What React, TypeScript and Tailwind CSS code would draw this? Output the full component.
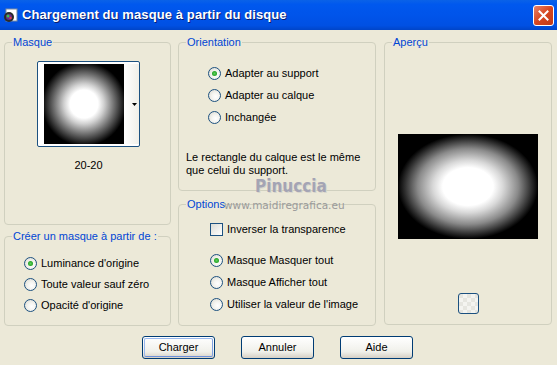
import React from "react";

const F = { fontFamily: '"Liberation Sans", Arial, sans-serif' };

function Radio({ checked, label }: { checked?: boolean; label: string }) {
  return (
    <div className="flex items-center h-[13px]">
      <div className="w-[13px] h-[13px] rounded-full border border-[#1C5180] bg-[radial-gradient(circle_at_60%_60%,#ffffff_0,#f4f4f0_40%,#d8d6cc_100%)] flex items-center justify-center shrink-0">
        {checked && <div className="w-[5px] h-[5px] rounded-full bg-[radial-gradient(circle,#5ed05e_0,#21a121_70%)]" />}
      </div>
      <span className="ml-[4px] text-[11px] text-black leading-none whitespace-nowrap">{label}</span>
    </div>
  );
}

function Group({ title, className, children }: { title: string; className?: string; children?: React.ReactNode }) {
  return (
    <div className={"relative border border-[#D0D0BF] rounded-[4px] " + (className || "")}>
      <span className="absolute -top-[8px] left-[7px] bg-[#ECE9D8] px-[1px] text-[11px] leading-[14px] text-[#0046D5] whitespace-nowrap">{title}</span>
      {children}
    </div>
  );
}

function Btn({ label, focus }: { label: string; focus?: boolean }) {
  return (
    <div className="w-[73px] h-[23px] rounded-[3px] border border-[#003C74] bg-[linear-gradient(#ffffff,#f0f0ea_70%,#d6d0c5)] flex items-center justify-center relative">
      {focus && <div className="absolute inset-[1px] rounded-[2px] border border-[#99B8EE] border-b-[#6C90DA] border-r-[#7FA0E0]" />}
      <span className="relative text-[11px] text-black leading-none">{label}</span>
    </div>
  );
}

export default function App() {
  return (
    <div className="w-[557px] h-[365px] bg-[#ECE9D8] relative overflow-hidden" style={F}>
      {/* Title bar */}
      <div className="h-[30px] bg-[linear-gradient(#0A62E8,#0058EE_15%,#0054EA_50%,#0050E3_85%,#0045C8)] flex items-center pl-[3px] pr-[3px]">
        <svg width="15" height="15" viewBox="0 0 15 15" className="mr-[4px]">
          <rect x="3" y="1" width="11" height="12" fill="#ffffff" stroke="#7a8aa0" />
          <circle cx="6" cy="9" r="5" fill="#2a2a2a" />
          <circle cx="6" cy="9" r="3" fill="#6a2a8a" />
          <circle cx="5" cy="8" r="1.5" fill="#3ec050" />
          <circle cx="7.5" cy="10" r="1.2" fill="#e04040" />
        </svg>
        <span className="text-white font-bold text-[13px] tracking-[0.1px] [text-shadow:1px_1px_0_#0A1E6E]">Chargement du masque à partir du disque</span>
        <div className="ml-auto w-[21px] h-[21px] rounded-[3px] border border-white bg-[linear-gradient(135deg,#E8836A,#D7461F_50%,#C03A18)] flex items-center justify-center">
          <svg width="11" height="11" viewBox="0 0 11 11">
            <path d="M1.5 1.5 L9.5 9.5 M9.5 1.5 L1.5 9.5" stroke="#ffffff" strokeWidth="2" strokeLinecap="square" />
          </svg>
        </div>
      </div>

      {/* Body */}
      <div className="flex pl-[4px] pt-[12px]">
        {/* Left column */}
        <div className="flex flex-col w-[167px] gap-[11px]">
          <Group title="Masque" className="h-[183px] flex flex-col items-center">
            <div className="mt-[18px] ml-[2px] w-[103px] h-[86px] rounded-[2px] border border-[#1C5180] bg-white flex items-start pl-[6px] pt-[2px]">
              <div className="w-[80px] h-[80px] bg-[radial-gradient(circle_at_50%_50%,#ffffff_0,#ffffff_14px,#d0d0d0_20px,#707070_30px,#000000_42px)]" />
              <div className="flex-1 h-[80px] bg-[linear-gradient(90deg,#ffffff,#f0efe8)] flex items-center justify-end pr-[2px]">
                <svg width="5" height="3" viewBox="0 0 5 3"><path d="M0 0 H5 L2.5 3 Z" fill="#000" /></svg>
              </div>
            </div>
            <div className="mt-[13px] ml-[2px] text-[11px] leading-none text-black">20-20</div>
          </Group>
          <Group title="Créer un masque à partir de :" className="h-[90px] flex flex-col gap-[8px] pl-[19px] pt-[20px]">
            <Radio checked label="Luminance d'origine" />
            <Radio label="Toute valeur sauf zéro" />
            <Radio label="Opacité d'origine" />
          </Group>
        </div>

        {/* Middle column */}
        <div className="flex flex-col w-[198px] gap-[13px] ml-[7px]">
          <Group title="Orientation" className="h-[149px] flex flex-col pl-[29px] pt-[24px]">
            <div className="flex flex-col gap-[9px]">
              <Radio checked label="Adapter au support" />
              <Radio label="Adapter au calque" />
              <Radio label="Inchangée" />
            </div>
            <div className="-ml-[22px] mt-[27px] text-[11px] leading-[13px] text-black">
              Le rectangle du calque est le même
              <br />
              que celui du support.
            </div>
          </Group>
          <Group title="Options" className="h-[122px] flex flex-col pl-[31px] pt-[18px]">
            <div className="flex items-center">
              <div className="w-[13px] h-[13px] border border-[#1C5180] bg-[linear-gradient(135deg,#dcdcd4,#ffffff)]" />
              <span className="ml-[4px] text-[11px] leading-none text-black">Inverser la transparence</span>
            </div>
            <div className="flex flex-col gap-[9px] mt-[18px]">
              <Radio checked label="Masque Masquer tout" />
              <Radio label="Masque Afficher tout" />
              <Radio label="Utiliser la valeur de l'image" />
            </div>
          </Group>
        </div>

        {/* Right column */}
        <div className="flex flex-col w-[168px] ml-[8px]">
          <Group title="Aperçu" className="h-[283px] flex flex-col items-center">
            <div className="mt-[91px] w-[140px] h-[105px] bg-[radial-gradient(ellipse_closest-side_at_50%_50%,#ffffff_0,#ffffff_36%,#d8d8d8_50%,#8a8a8a_72%,#303030_90%,#000000_100%)]" />
            <div className="mt-[54px] w-[21px] h-[21px] rounded-[3px] border border-[#1C5180] bg-[repeating-conic-gradient(#f4f4f0_0_25%,#e6e6e0_0_50%)] bg-[length:8px_8px]" />
          </Group>
        </div>
      </div>

      {/* Buttons */}
      <div className="flex gap-[26px] pl-[142px] mt-[10px]">
        <Btn label="Charger" focus />
        <Btn label="Annuler" />
        <Btn label="Aide" />
      </div>

      {/* Watermark overlay */}
      <div className="absolute left-[255px] top-[178px] text-[17px] font-bold text-[#A4A4B4] leading-none [text-shadow:1px_1px_0_#d8d6cc]" style={{ fontFamily: '"DejaVu Sans Condensed", "DejaVu Sans", sans-serif' }}>
        Pinuccia
      </div>
      <div className="absolute left-[224px] top-[200px] text-[10.5px] text-[#9A9A9A] leading-none" style={{ fontFamily: '"DejaVu Sans", sans-serif' }}>
        www.maidiregrafica.eu
      </div>
    </div>
  );
}
